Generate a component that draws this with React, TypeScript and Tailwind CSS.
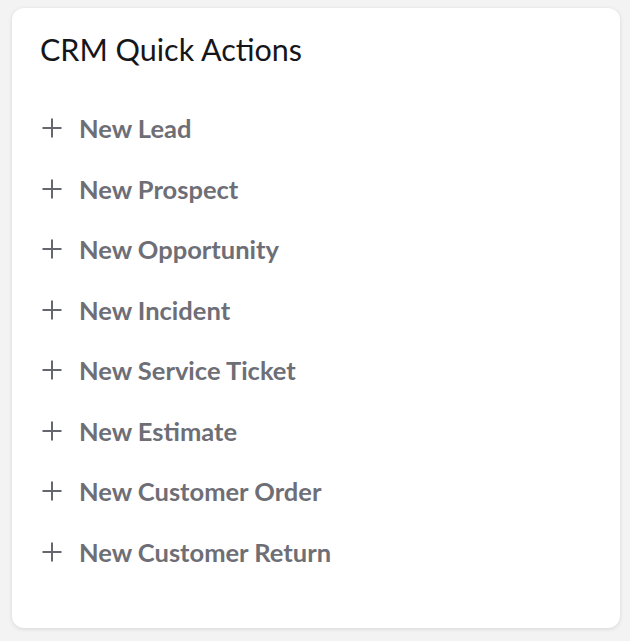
const actions = [
  "New Lead",
  "New Prospect",
  "New Opportunity",
  "New Incident",
  "New Service Ticket",
  "New Estimate",
  "New Customer Order",
  "New Customer Return",
]

function PlusIcon() {
  return (
    <svg width="20" height="20" viewBox="0 0 20 20" className="shrink-0 text-[#66666e]">
      <path d="M10 0.5V19.5M0.5 10H19.5" stroke="currentColor" strokeWidth="2" fill="none" />
    </svg>
  )
}

export default function App() {
  return (
    <div className="min-h-[641px] w-[630px] bg-[#f3f3f3] pl-3 pr-[10px] pt-2 pb-[13px] font-['Lato',sans-serif]">
      <div className="h-[620px] w-[608px] rounded-xl bg-white px-7 pt-[21px] shadow-[0_1px_4px_rgba(0,0,0,0.12)]">
        <h2 className="text-[30.5px] leading-10 text-[#16161a]">CRM Quick Actions</h2>
        <ul className="mt-[29px] flex flex-col">
          {actions.map((label) => (
            <li key={label}>
              <button className="flex h-[60.5px] items-center gap-[17px] pl-[2px] text-[25.5px] font-bold text-[#6e6e76]">
                <PlusIcon />
                {label}
              </button>
            </li>
          ))}
        </ul>
      </div>
    </div>
  )
}
